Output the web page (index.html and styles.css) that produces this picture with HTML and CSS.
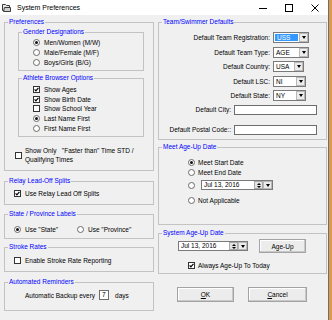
FILE: index.html
```html
<!DOCTYPE html>
<html lang="en">
<head>
  <meta charset="UTF-8">
  <title>System Preferences</title>
  <link rel="stylesheet" href="styles.css">
</head>
<body>
<div class="screen">
  <div class="window">

    <div class="titlebar">
      <svg class="app-icon" width="9" height="9" viewBox="0 0 9 9">
        <path d="M0.5 1.5H3.5L4.5 2.5H7.5V7.5H0.5Z" fill="#e8e8e8" stroke="#3a3a3a"/>
        <path d="M2.5 4.5H8.5V8.5H1.5Z" fill="#cfcfcf" stroke="#3a3a3a"/>
      </svg>
      <span class="title">System Preferences</span>
      <div class="controls">
        <span class="ctl"><svg width="8" height="8" viewBox="0 0 8 8"><path d="M0 4.5H8" stroke="#000"/></svg></span>
        <span class="ctl"><svg width="8" height="8" viewBox="0 0 8 8"><rect x="0.5" y="0.5" width="7" height="7" fill="none" stroke="#000"/></svg></span>
        <span class="ctl"><svg width="8" height="8" viewBox="0 0 8 8"><path d="M0.5 0.5L7.5 7.5M7.5 0.5L0.5 7.5" stroke="#000"/></svg></span>
      </div>
    </div>

    <div class="dialog">
      <!-- left column -->
      <div class="col-left">
        <fieldset class="group g-prefs">
          <legend>Preferences</legend>

          <fieldset class="group g-inner g-gender">
            <legend>Gender Designations</legend>
            <div class="opts">
              <div class="row opt"><span class="radio on"></span>Men/Women (M/W)</div>
              <div class="row opt"><span class="radio"></span>Male/Female (M/F)</div>
              <div class="row opt"><span class="radio"></span>Boys/Girls (B/G)</div>
            </div>
          </fieldset>

          <fieldset class="group g-inner g-browser">
            <legend>Athlete Browser Options</legend>
            <div class="opts">
              <div class="row opt tight"><span class="check on"><svg viewBox="0 0 5 5"><path d="M0.6 2.4L1.9 3.8L4.4 0.8"/></svg></span>Show Ages</div>
              <div class="row opt tight"><span class="check on"><svg viewBox="0 0 5 5"><path d="M0.6 2.4L1.9 3.8L4.4 0.8"/></svg></span>Show Birth Date</div>
              <div class="row opt tight"><span class="check"></span>Show School Year</div>
              <div class="row opt tight"><span class="radio on"></span>Last Name First</div>
              <div class="row opt tight"><span class="radio"></span>First Name First</div>
            </div>
          </fieldset>

          <div class="faster">
            <span class="check"></span>
            <span class="faster-text">Show Only &nbsp;&nbsp;"Faster than" Time STD /<br>Qualifying Times</span>
          </div>
        </fieldset>

        <fieldset class="group g-relay">
          <legend>Relay Lead-Off Splits</legend>
          <div class="pad">
            <div class="row opt"><span class="check on"><svg viewBox="0 0 5 5"><path d="M0.6 2.4L1.9 3.8L4.4 0.8"/></svg></span>Use Relay Lead Off Splits</div>
          </div>
        </fieldset>

        <fieldset class="group g-state">
          <legend>State / Province Labels</legend>
          <div class="pad">
            <div class="row">
              <span class="opt state-opt"><span class="radio on"></span>Use "State"</span>
              <span class="opt"><span class="radio"></span>Use "Province"</span>
            </div>
          </div>
        </fieldset>

        <fieldset class="group g-stroke">
          <legend>Stroke Rates</legend>
          <div class="pad">
            <div class="row opt"><span class="check"></span>Enable Stroke Rate Reporting</div>
          </div>
        </fieldset>

        <fieldset class="group g-auto">
          <legend>Automated Reminders</legend>
          <div class="pad backup">
            <div class="row">
              Automatic Backup every
              <span class="num">7</span>
              <span class="days">days</span>
            </div>
          </div>
        </fieldset>
      </div>

      <!-- right column -->
      <div class="col-right">
        <fieldset class="group g-team">
          <legend>Team/Swimmer Defaults</legend>
          <div class="team-rows">
            <div class="sel-row">
              <span class="sel-label">Default Team Registration:</span>
              <span class="combo w36"><span class="val picked">USS</span><span class="drop"><i class="tri"></i></span></span>
            </div>
            <div class="sel-row">
              <span class="sel-label">Default Team Type:</span>
              <span class="combo w36"><span class="val">AGE</span><span class="drop"><i class="tri"></i></span></span>
            </div>
            <div class="sel-row">
              <span class="sel-label">Default Country:</span>
              <span class="combo w31"><span class="val">USA</span><span class="drop"><i class="tri"></i></span></span>
            </div>
            <div class="sel-row">
              <span class="sel-label">Default LSC:</span>
              <span class="combo w33"><span class="val">NI</span><span class="drop"><i class="tri"></i></span></span>
            </div>
            <div class="sel-row">
              <span class="sel-label">Default State:</span>
              <span class="combo w33"><span class="val">NY</span><span class="drop"><i class="tri"></i></span></span>
            </div>
            <div class="txt-row">
              <span class="txt-label">Default City:</span>
              <span class="field"></span>
            </div>
            <div class="txt-row postal">
              <span class="txt-label">Default Postal Code::</span>
              <span class="field"></span>
            </div>
          </div>
        </fieldset>

        <fieldset class="group g-meet">
          <legend>Meet Age-Up Date</legend>
          <div class="meet-rows">
            <div class="row opt narrow"><span class="radio on"></span>Meet Start Date</div>
            <div class="row opt narrow"><span class="radio"></span>Meet End Date</div>
            <div class="row date-row">
              <span class="radio"></span>
              <span class="date w72">
                <span class="date-text">Jul 13, 2016</span>
                <span class="spin"><i class="tri up"></i><i class="tri"></i></span>
                <span class="drop"><i class="tri"></i></span>
              </span>
            </div>
            <div class="row opt narrow na"><span class="radio"></span>Not Applicable</div>
          </div>
        </fieldset>

        <fieldset class="group g-system">
          <legend>System Age-Up Date</legend>
          <div class="system-rows">
            <div class="age-row">
              <span class="date w70">
                <span class="date-text">Jul 13, 2016</span>
                <span class="spin"><i class="tri up"></i><i class="tri"></i></span>
                <span class="drop"><i class="tri"></i></span>
              </span>
              <span class="btn age-btn">Age-Up</span>
            </div>
            <div class="row opt narrow always"><span class="check on"><svg viewBox="0 0 5 5"><path d="M0.6 2.4L1.9 3.8L4.4 0.8"/></svg></span>Always Age-Up To Today</div>
          </div>
        </fieldset>

        <div class="actions">
          <span class="btn ok"><u>O</u>K</span>
          <span class="btn cancel"><u>C</u>ancel</span>
        </div>
      </div>
    </div>

  </div>
  <div class="edge"></div>
</div>
</body>
</html>
```

FILE: styles.css
```css
* {
  box-sizing: border-box;
}

body {
  margin: 0;
  font-family: "Liberation Sans", Arial, sans-serif;
  font-size: 6.5px;
  color: #000;
  background: #f0f0f0;
}

.screen {
  display: flex;
  width: 332px;
  height: 320px;
  overflow: hidden;
}

.window {
  width: 329px;
  height: 320px;
  background: #f0f0f0;
  border-right: 1px solid #6d6d6d;
}

.edge {
  width: 3px;
  background: #dc9a4e;
}

/* title bar */
.titlebar {
  height: 15px;
  background: #fff;
  display: flex;
  align-items: center;
}

.app-icon {
  margin-left: 2px;
}

.title {
  margin-left: 6px;
  font-size: 7px;
}

.controls {
  margin-left: auto;
  display: flex;
}

.ctl {
  width: 26px;
  height: 15px;
  display: flex;
  align-items: center;
  justify-content: center;
}

/* dialog body */
.dialog {
  display: flex;
  gap: 4px;
  padding: 3px 0 0 4px;
}

.col-left {
  width: 150px;
}

.col-right {
  width: 169px;
}

.group {
  margin: 0;
  padding: 0;
  border: 1px solid #c3c3c3;
  min-width: 0;
}

.group legend {
  margin-left: 3px;
  padding: 0 1px;
  line-height: 8px;
  color: #0000ff;
}

.row {
  display: flex;
  align-items: center;
  height: 10px;
  white-space: nowrap;
}

.opt {
  display: flex;
  align-items: center;
  gap: 4px;
}

/* checkboxes and radios */
.check {
  flex: none;
  width: 7px;
  height: 7px;
  border: 1px solid #333;
  background: #fff;
  display: inline-flex;
}

.check svg {
  width: 5px;
  height: 5px;
  fill: none;
  stroke: #000;
  stroke-width: 1.2;
}

.radio {
  flex: none;
  width: 7px;
  height: 7px;
  border-radius: 50%;
  border: 1px solid #6a6a6a;
  background: #fff;
  display: inline-flex;
  align-items: center;
  justify-content: center;
}

.radio.on::after {
  content: "";
  width: 3px;
  height: 3px;
  border-radius: 50%;
  background: #111;
}

/* left column groups */
.g-prefs {
  height: 153px;
}

.g-inner {
  margin-left: 13px;
  width: 126px;
}

.g-gender {
  margin-top: 2px;
  height: 43px;
}

.g-gender .opts {
  padding: 1px 0 0 14px;
}

.g-browser {
  margin-top: 3px;
  height: 63px;
}

.g-browser .opts {
  padding: 3px 0 0 14px;
}

.row.tight {
  height: 9.6px;
}

.faster {
  display: flex;
  align-items: center;
  gap: 3px;
  margin: 9px 0 0 10px;
  line-height: 9px;
}

.g-relay {
  margin-top: 6px;
  height: 28px;
}

.g-relay .pad {
  padding: 3px 0 0 9px;
}

.g-state {
  margin-top: 5px;
  height: 29px;
}

.g-state .pad {
  padding: 6px 0 0 9px;
}

.state-opt {
  width: 63px;
}

.g-stroke {
  margin-top: 4px;
  height: 29px;
}

.g-stroke .pad {
  padding: 4px 0 0 9px;
}

.g-auto {
  margin-top: 6px;
  height: 33px;
}

.g-auto .pad {
  padding: 4px 0 0 20px;
}

.num {
  width: 10px;
  height: 10px;
  margin-left: 4px;
  padding-left: 2px;
  border: 1px solid #6d6d6d;
  background: #fff;
  line-height: 8px;
}

.days {
  margin-left: 6px;
}

/* right column groups */
.g-team {
  height: 122px;
}

.team-rows {
  padding-top: 6px;
}

.sel-row {
  display: flex;
  align-items: center;
  height: 11px;
  margin-bottom: 3.5px;
}

.sel-label {
  width: 111px;
  text-align: right;
  white-space: nowrap;
}

.combo {
  margin-left: 3px;
  height: 11px;
  display: flex;
  border: 1px solid #7a7a7a;
  background: #fff;
}

.w36 { width: 36px; }
.w33 { width: 33px; }
.w31 { width: 31px; }

.val {
  flex: 1;
  padding-left: 2px;
  line-height: 9px;
}

.val.picked {
  margin: 1px 1px 1px 1px;
  line-height: 7px;
  background: #3399ff;
  color: #fff;
}

.drop {
  flex: none;
  width: 9px;
  display: flex;
  align-items: center;
  justify-content: center;
  background: #ececec;
  border: 1px solid #b8b8b8;
}

.tri {
  width: 0;
  height: 0;
  border-left: 2.5px solid transparent;
  border-right: 2.5px solid transparent;
  border-top: 3px solid #000;
}

.tri.up {
  border-top: 0;
  border-bottom: 3px solid #000;
}

.txt-row {
  display: flex;
  align-items: center;
  height: 10px;
}

.txt-label {
  width: 72px;
  text-align: right;
  white-space: nowrap;
}

.field {
  margin-left: 3px;
  width: 83px;
  height: 10px;
  border: 1px solid #6d6d6d;
  background: #fff;
}

.postal {
  margin-top: 10px;
}

.g-meet {
  margin-top: 3px;
  height: 82px;
}

.meet-rows {
  padding: 6px 0 0 29px;
}

.opt.narrow {
  gap: 3px;
}

.date-row {
  margin-top: 3px;
  gap: 6px;
}

.na {
  margin-top: 5px;
}

.date {
  height: 10px;
  display: flex;
  border: 1px solid #7a7a7a;
  background: #fff;
}

.w72 { width: 72px; }
.w70 { width: 70px; }

.date-text {
  flex: 1;
  padding-left: 2px;
  line-height: 8px;
}

.spin {
  flex: none;
  width: 9px;
  display: flex;
  flex-direction: column;
  align-items: center;
  justify-content: center;
  gap: 1px;
  background: #e3e3e3;
  border: 1px solid #a8a8a8;
}

.spin .tri {
  border-left-width: 2px;
  border-right-width: 2px;
  border-top-width: 2px;
}

.spin .tri.up {
  border-bottom-width: 2px;
  border-top-width: 0;
}

.g-system {
  margin-top: 4px;
  height: 45px;
}

.system-rows {
  padding: 2px 0 0 19px;
}

.age-row {
  display: flex;
  align-items: center;
  height: 14px;
}

.btn {
  display: flex;
  align-items: center;
  justify-content: center;
  height: 15px;
  background: #ececec;
  border: 1px solid #a3a3a3;
  box-shadow: inset -1px -1px #c9c9c9, inset 1px 1px #fff;
}

.age-btn {
  margin-left: 11px;
  width: 47px;
  height: 14px;
}

.always {
  margin-top: 7px;
  padding-left: 10px;
}

.actions {
  display: flex;
  gap: 14px;
  margin: 13px 0 0 19px;
}

.ok {
  width: 57px;
}

.cancel {
  width: 59px;
}
```
